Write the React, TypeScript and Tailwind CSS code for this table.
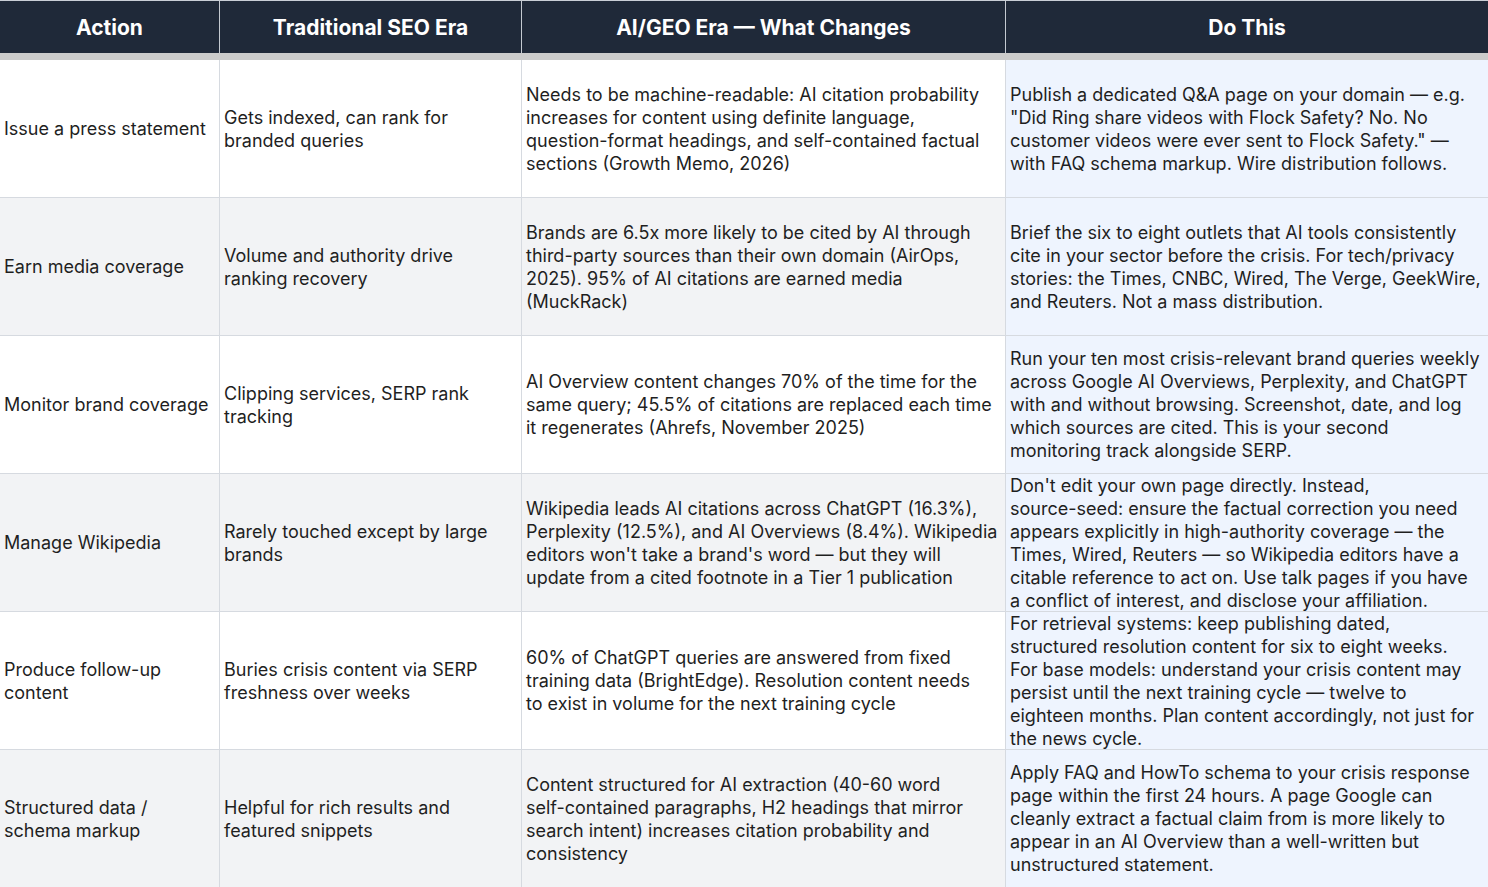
const headers = ["Action", "Traditional SEO Era", "AI/GEO Era — What Changes", "Do This"];

// Line breaks follow the source table so the cells wrap the same way.
interface Row {
  action: string;
  traditional: string;
  geo: string;
  doThis: string;
}

const rows: Row[] = [
  {
    action: "Issue a press statement",
    traditional: "Gets indexed, can rank for\nbranded queries",
    geo: "Needs to be machine-readable: AI citation probability\nincreases for content using definite language,\nquestion-format headings, and self-contained factual\nsections (Growth Memo, 2026)",
    doThis:
      'Publish a dedicated Q&A page on your domain — e.g.\n"Did Ring share videos with Flock Safety? No. No\ncustomer videos were ever sent to Flock Safety." —\nwith FAQ schema markup. Wire distribution follows.',
  },
  {
    action: "Earn media coverage",
    traditional: "Volume and authority drive\nranking recovery",
    geo: "Brands are 6.5x more likely to be cited by AI through\nthird-party sources than their own domain (AirOps,\n2025). 95% of AI citations are earned media\n(MuckRack)",
    doThis:
      "Brief the six to eight outlets that AI tools consistently\ncite in your sector before the crisis. For tech/privacy\nstories: the Times, CNBC, Wired, The Verge, GeekWire,\nand Reuters. Not a mass distribution.",
  },
  {
    action: "Monitor brand coverage",
    traditional: "Clipping services, SERP rank\ntracking",
    geo: "AI Overview content changes 70% of the time for the\nsame query; 45.5% of citations are replaced each time\nit regenerates (Ahrefs, November 2025)",
    doThis:
      "Run your ten most crisis-relevant brand queries weekly\nacross Google AI Overviews, Perplexity, and ChatGPT\nwith and without browsing. Screenshot, date, and log\nwhich sources are cited. This is your second\nmonitoring track alongside SERP.",
  },
  {
    action: "Manage Wikipedia",
    traditional: "Rarely touched except by large\nbrands",
    geo: "Wikipedia leads AI citations across ChatGPT (16.3%),\nPerplexity (12.5%), and AI Overviews (8.4%). Wikipedia\neditors won't take a brand's word — but they will\nupdate from a cited footnote in a Tier 1 publication",
    doThis:
      "Don't edit your own page directly. Instead,\nsource-seed: ensure the factual correction you need\nappears explicitly in high-authority coverage — the\nTimes, Wired, Reuters — so Wikipedia editors have a\ncitable reference to act on. Use talk pages if you have\na conflict of interest, and disclose your affiliation.",
  },
  {
    action: "Produce follow-up\ncontent",
    traditional: "Buries crisis content via SERP\nfreshness over weeks",
    geo: "60% of ChatGPT queries are answered from fixed\ntraining data (BrightEdge). Resolution content needs\nto exist in volume for the next training cycle",
    doThis:
      "For retrieval systems: keep publishing dated,\nstructured resolution content for six to eight weeks.\nFor base models: understand your crisis content may\npersist until the next training cycle — twelve to\neighteen months. Plan content accordingly, not just for\nthe news cycle.",
  },
  {
    action: "Structured data /\nschema markup",
    traditional: "Helpful for rich results and\nfeatured snippets",
    geo: "Content structured for AI extraction (40-60 word\nself-contained paragraphs, H2 headings that mirror\nsearch intent) increases citation probability and\nconsistency",
    doThis:
      "Apply FAQ and HowTo schema to your crisis response\npage within the first 24 hours. A page Google can\ncleanly extract a factual claim from is more likely to\nappear in an AI Overview than a well-written but\nunstructured statement.",
  },
];

function Cell({ children, bg, last }: { children: string; bg: string; last?: boolean }) {
  return (
    <div
      className={`${bg} ${last ? "" : "border-r border-[#d6dae0]"} flex items-center overflow-hidden pl-1 pr-0.5 text-[18px] leading-[23px] text-[#1f1f1f]`}
    >
      <span className="whitespace-pre">{children}</span>
    </div>
  );
}

export default function App() {
  return (
    <div
      className="h-[887px] w-[1488px] overflow-hidden bg-white"
      style={{ fontFamily: "Inter, 'Noto Sans', sans-serif" }}
    >
      <div className="grid grid-cols-[220px_302px_484px_1fr] border-t border-[#c9ced6] border-b-[7px] border-b-[#cbcbcb] bg-[#1f2939]">
        {headers.map((h, i) => (
          <div
            key={h}
            className={`flex h-[52px] items-center justify-center pt-0.5 text-[21px] font-bold text-white ${
              i < headers.length - 1 ? "border-r border-[#c4c9d1]" : ""
            }`}
          >
            {h}
          </div>
        ))}
      </div>
      {rows.map((r, i) => {
        const bg = i % 2 === 0 ? "bg-white" : "bg-[#f2f3f5]";
        return (
          <div
            key={r.action}
            className="grid h-[138px] grid-cols-[220px_302px_484px_1fr] border-b border-[#d6dae0]"
          >
            <Cell bg={bg}>{r.action}</Cell>
            <Cell bg={bg}>{r.traditional}</Cell>
            <Cell bg={bg}>{r.geo}</Cell>
            <Cell bg="bg-[#eef4fe]" last>
              {r.doThis}
            </Cell>
          </div>
        );
      })}
    </div>
  );
}
